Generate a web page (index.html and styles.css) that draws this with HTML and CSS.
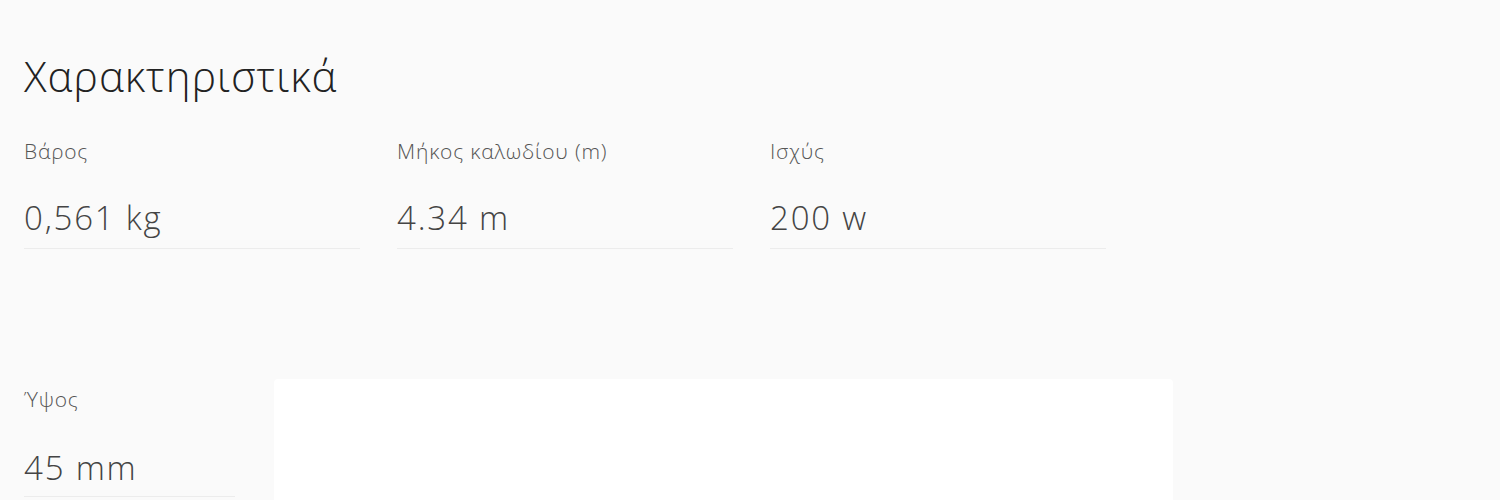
FILE: index.html
```html
<!DOCTYPE html>
<html lang="el">
<head>
<meta charset="utf-8">
<link rel="stylesheet" href="styles.css">
</head>
<body>
<section class="specs">
  <h2 class="specs-title">Χαρακτηριστικά</h2>
  <div class="spec-row">
    <div class="spec">
      <div class="spec-label">Βάρος</div>
      <div class="spec-value">0,561 kg</div>
    </div>
    <div class="spec">
      <div class="spec-label">Μήκος καλωδίου (m)</div>
      <div class="spec-value">4.34 m</div>
    </div>
    <div class="spec">
      <div class="spec-label">Ισχύς</div>
      <div class="spec-value">200 w</div>
    </div>
  </div>
  <div class="spec-row second">
    <div class="spec narrow">
      <div class="spec-label">Ύψος</div>
      <div class="spec-value">45 mm</div>
    </div>
    <div class="media-box"></div>
  </div>
</section>
</body>
</html>
```
FILE: styles.css
```css
html, body {
  margin: 0;
  padding: 0;
  background: #fafafa;
  height: 100%;
  overflow: hidden;
}
body {
  font-family: "Open Sans", "Noto Sans", sans-serif;
  font-weight: 300;
}
.specs {
  padding: 50px 24px 0 24px;
}
.specs-title {
  margin: 0;
  font-size: 42px;
  font-weight: 300;
  line-height: 52px;
  color: #222;
  letter-spacing: 1px;
}
.spec-row {
  display: flex;
  gap: 37px;
  margin-top: 37px;
}
.spec {
  width: 336px;
  border-bottom: 1px solid #ececec;
  padding-bottom: 12px;
}
.spec-label {
  font-size: 21px;
  line-height: 24px;
  letter-spacing: 0.8px;
  color: #555;
}
.spec-value {
  margin-top: 37px;
  font-size: 33px;
  line-height: 36px;
  letter-spacing: 1.8px;
  color: #444;
}
.spec-row.second {
  margin-top: 132px;
  gap: 39px;
  align-items: flex-start;
}
.spec.narrow {
  width: 211px;
  margin-top: 6px;
  padding-bottom: 10px;
}
.spec.narrow .spec-value {
  margin-top: 39px;
}
.media-box {
  width: 899px;
  height: 200px;
  background: #fff;
  border-radius: 4px;
  margin-top: -2px;
}
```
